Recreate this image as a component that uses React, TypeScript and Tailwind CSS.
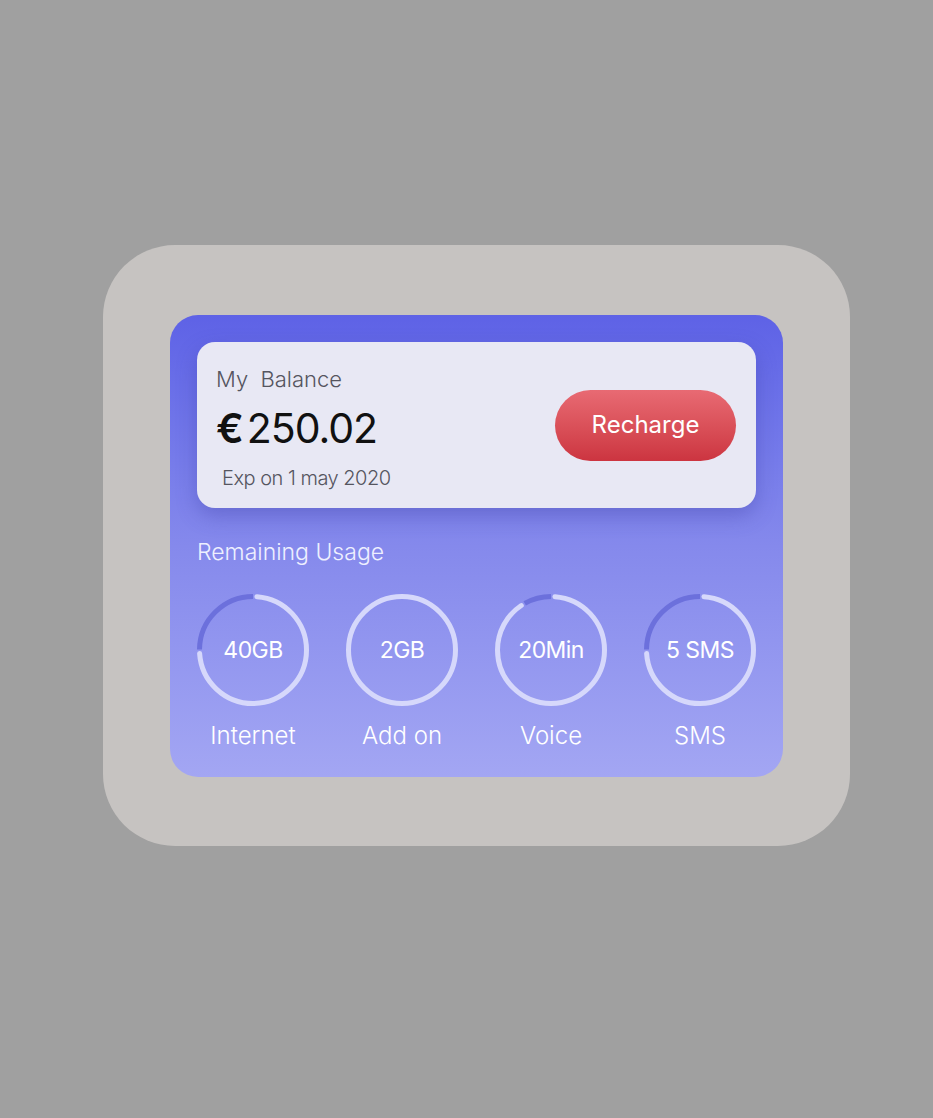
const usage = [
  { value: "40GB", label: "Internet", used: 90 },
  { value: "2GB", label: "Add on", used: 0 },
  { value: "20Min", label: "Voice", used: 30 },
  { value: "5 SMS", label: "SMS", used: 90 },
];

function Ring({ used }: { used: number }) {
  const r = 53.5;
  const c = 2 * Math.PI * r;
  const gap = used > 0 ? 4 : 0;
  const darkLen = (used / 360) * c;
  const lightLen = c - darkLen;
  // start at 12 o'clock, light goes clockwise, dark fills the rest (ending at top)
  return (
    <svg width="112" height="112" viewBox="0 0 112 112" className="absolute inset-0">
      <g transform="rotate(-90 56 56)">
        <circle
          cx="56"
          cy="56"
          r={r}
          fill="none"
          stroke="#d6d8fb"
          strokeWidth="5"
          strokeLinecap="round"
          strokeDasharray={used > 0 ? `${lightLen - gap * 2} ${c}` : undefined}
          strokeDashoffset={used > 0 ? -gap : 0}
        />
        {used > 0 && (
          <circle
            cx="56"
            cy="56"
            r={r}
            fill="none"
            stroke="#6c70dc"
            strokeWidth="5"
            strokeDasharray={`${darkLen} ${c}`}
            strokeDashoffset={-lightLen}
          />
        )}
      </g>
    </svg>
  );
}

export default function App() {
  return (
    <div
      className="min-h-[1118px] w-full bg-[#a0a0a0] pt-[245px] pl-[103px]"
      style={{ fontFamily: "Inter, 'Open Sans', sans-serif" }}
    >
      <div className="w-[747px] h-[601px] rounded-[72px] bg-[#c6c3c1] px-[67px] pt-[70px]">
        <div className="w-[613px] h-[462px] rounded-[28px] bg-gradient-to-b from-[#5e62e6] via-[#8589ec] to-[#a3a6f3] px-[27px] pt-[27px]">
          <div className="h-[166px] rounded-[18px] bg-[#e8e8f4] shadow-[0_8px_20px_rgba(60,60,160,0.35)] flex items-center justify-between pl-[19px] pr-[20px]">
            <div className="flex flex-col mt-[6px]">
              <div className="text-[22px] font-light text-[#55555f] leading-none">
                My&nbsp; Balance
              </div>
              <div className="mt-[18px] text-[41px] text-[#111] leading-none tracking-tight flex items-baseline">
                <span className="font-semibold mr-[4px]">€</span>
                <span>250.02</span>
              </div>
              <div className="mt-[19px] ml-[6px] text-[20px] font-light text-[#55555f] leading-none tracking-tight">
                Exp on 1 may 2020
              </div>
            </div>
            <button className="w-[181px] h-[71px] rounded-full bg-gradient-to-b from-[#e86a73] to-[#cc3440] text-white text-[24px] font-normal">
              Recharge
            </button>
          </div>

          <div className="mt-[33px] text-[23px] font-light text-[#eef0ff] leading-none">
            Remaining Usage
          </div>

          <div className="mt-[30px] flex justify-between">
            {usage.map((u) => (
              <div key={u.label} className="flex flex-col items-center w-[112px]">
                <div className="relative w-[112px] h-[112px] flex items-center justify-center">
                  <Ring used={u.used} />
                  <span className="relative text-[23px] font-normal text-white tracking-tight">{u.value}</span>
                </div>
                <div className="mt-[18px] text-[24px] font-light text-white leading-none whitespace-nowrap">
                  {u.label}
                </div>
              </div>
            ))}
          </div>
        </div>
      </div>
    </div>
  );
}
